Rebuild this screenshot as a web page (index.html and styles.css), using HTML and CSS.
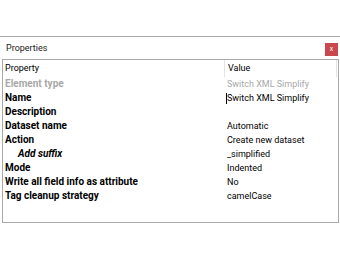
FILE: index.html
```html
<!DOCTYPE html>
<html>
<head>
<meta charset="utf-8">
<link rel="stylesheet" href="styles.css">
</head>
<body>
<div class="spacer"></div>
<div class="panel">
  <div class="titlebar">
    <span class="title">Properties</span>
    <span class="close">x</span>
  </div>
  <div class="grid">
    <div class="row head">
      <div class="cell prop">Property</div>
      <div class="cell val">Value</div>
      <div class="cell tail"></div>
    </div>
    <div class="row">
      <div class="cell prop dim">Element type</div>
      <div class="cell val dimv">Switch XML Simplify</div>
    </div>
    <div class="row">
      <div class="cell prop b">Name</div>
      <div class="cell val"><span class="caret"></span>Switch XML Simplify</div>
    </div>
    <div class="row">
      <div class="cell prop b">Description</div>
      <div class="cell val"></div>
    </div>
    <div class="row">
      <div class="cell prop b">Dataset name</div>
      <div class="cell val">Automatic</div>
    </div>
    <div class="row">
      <div class="cell prop b">Action</div>
      <div class="cell val">Create new dataset</div>
    </div>
    <div class="row">
      <div class="cell prop b i sub">Add suffix</div>
      <div class="cell val">_simplified</div>
    </div>
    <div class="row">
      <div class="cell prop b">Mode</div>
      <div class="cell val">Indented</div>
    </div>
    <div class="row">
      <div class="cell prop b">Write all field info as attribute</div>
      <div class="cell val">No</div>
    </div>
    <div class="row">
      <div class="cell prop b">Tag cleanup strategy</div>
      <div class="cell val">camelCase</div>
    </div>
  </div>
</div>
</body>
</html>
```
FILE: styles.css
```css
html, body {
  margin: 0;
  padding: 0;
  background: #ffffff;
  width: 340px;
  height: 260px;
  overflow: hidden;
  font-family: "Roboto", "Noto Sans", sans-serif;
  font-size: 9px;
  color: #000;
}
.spacer {
  height: 36px;
}
.panel {
  border-top: 1px solid #a9a9a9;
}
.titlebar {
  height: 22px;
  display: flex;
  align-items: center;
  justify-content: space-between;
  padding: 0 2px 0 6px;
}
.title {
  font-size: 9px;
  color: #1a1a1a;
}
.close {
  width: 13px;
  height: 13px;
  background: #c9484d;
  color: #fff;
  font-size: 7px;
  line-height: 12px;
  text-align: center;
  margin-top: 2px;
}
.grid {
  margin: 0 1px 0 2px;
  border: 1px solid #a9a9a9;
  height: 162px;
}
.row {
  display: flex;
  height: 14px;
  line-height: 14px;
  white-space: nowrap;
}
.row.head {
  height: 17px;
  line-height: 16px;
}
.cell.prop {
  width: 219px;
  padding-left: 2px;
}
.cell.val {
  flex: 1;
  padding-left: 3px;
  position: relative;
}
.head .cell.prop {
  border-right: 1px solid #e3e3e3;
}
.head .cell.val {
  border-right: 1px solid #e3e3e3;
}
.head .cell.tail {
  width: 1px;
}
.b { font-weight: bold; font-size: 10px; }
.i { font-style: italic; }
.sub { padding-left: 15px !important; width: 206px !important; }
.dim { font-weight: bold; font-size: 10px; color: #a8a8a8; }
.dimv { color: #a8a8a8; }
.caret {
  position: absolute;
  left: 2px;
  top: 2px;
  width: 1px;
  height: 11px;
  background: #000;
}
```
